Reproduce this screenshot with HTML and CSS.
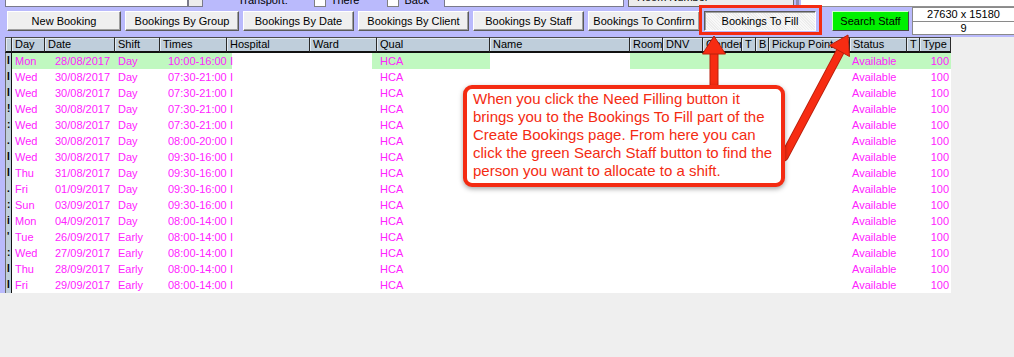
FILE: index.html
```html
<!DOCTYPE html>
<html>
<head>
<meta charset="utf-8">
<link rel="stylesheet" href="styles.css">
</head>
<body>
<div class="app">
  <div class="topbar">
    <div class="toprow">
      <div class="tinput"></div>
      <div class="tdrop"></div>
      <div class="tlabel">Transport:</div>
      <div class="tcheck c1"></div>
      <div class="tlabel small">There</div>
      <div class="tcheck c2"></div>
      <div class="tlabel small">Back</div>
      <div class="tinput wide"></div>
      <div class="tbutton">Room Number</div>
      <div class="tdivider"></div>
      <div class="tpanel"></div>
    </div>
    <div class="btnrow">
      <div class="btn w114">New Booking</div>
      <div class="btn w114">Bookings By Group</div>
      <div class="btn w111">Bookings By Date</div>
      <div class="btn w111">Bookings By Client</div>
      <div class="btn w111">Bookings By Staff</div>
      <div class="btn w112">Bookings To Confirm</div>
      <div class="btn w112 pressed">Bookings To Fill</div>
      <div class="btn search">Search Staff</div>
      <div class="sizebox">
        <div class="sizeline">27630 x 15180</div>
        <div class="sizeline">9</div>
      </div>
    </div>
  </div>

  <div class="main">
    <div class="lstrip"></div>
    <div class="grid">
      <div class="cols head">
        <div class="hc"></div>
        <div class="hc">Day</div>
        <div class="hc">Date</div>
        <div class="hc">Shift</div>
        <div class="hc">Times</div>
        <div class="hc">Hospital</div>
        <div class="hc">Ward</div>
        <div class="hc">Qual</div>
        <div class="hc">Name</div>
        <div class="hc">Room</div>
        <div class="hc">DNV</div>
        <div class="hc">Gender</div>
        <div class="hc">T</div>
        <div class="hc">B</div>
        <div class="hc">Pickup Point</div>
        <div class="hc">Status</div>
        <div class="hc">T</div>
        <div class="hc">Type</div>
      </div>

      <div class="cols row sel"><div class="ind">I</div><div class="dc">Mon</div><div class="dc date">28/08/2017</div><div class="dc">Day</div><div class="dc times">10:00-16:00</div><div class="dc hosp">I</div><div class="dc"></div><div class="dc">HCA</div><div class="dc"></div><div class="dc"></div><div class="dc"></div><div class="dc"></div><div class="dc"></div><div class="dc"></div><div class="dc"></div><div class="dc status">Available</div><div class="dc"></div><div class="dc type">100</div></div>
      <div class="cols row"><div class="ind">I</div><div class="dc">Wed</div><div class="dc date">30/08/2017</div><div class="dc">Day</div><div class="dc times">07:30-21:00</div><div class="dc hosp">I</div><div class="dc"></div><div class="dc">HCA</div><div class="dc"></div><div class="dc"></div><div class="dc"></div><div class="dc"></div><div class="dc"></div><div class="dc"></div><div class="dc"></div><div class="dc status">Available</div><div class="dc"></div><div class="dc type">100</div></div>
      <div class="cols row"><div class="ind">I</div><div class="dc">Wed</div><div class="dc date">30/08/2017</div><div class="dc">Day</div><div class="dc times">07:30-21:00</div><div class="dc hosp">I</div><div class="dc"></div><div class="dc">HCA</div><div class="dc"></div><div class="dc"></div><div class="dc"></div><div class="dc"></div><div class="dc"></div><div class="dc"></div><div class="dc"></div><div class="dc status">Available</div><div class="dc"></div><div class="dc type">100</div></div>
      <div class="cols row"><div class="ind">!</div><div class="dc">Wed</div><div class="dc date">30/08/2017</div><div class="dc">Day</div><div class="dc times">07:30-21:00</div><div class="dc hosp">I</div><div class="dc"></div><div class="dc">HCA</div><div class="dc"></div><div class="dc"></div><div class="dc"></div><div class="dc"></div><div class="dc"></div><div class="dc"></div><div class="dc"></div><div class="dc status">Available</div><div class="dc"></div><div class="dc type">100</div></div>
      <div class="cols row"><div class="ind">:</div><div class="dc">Wed</div><div class="dc date">30/08/2017</div><div class="dc">Day</div><div class="dc times">07:30-21:00</div><div class="dc hosp">I</div><div class="dc"></div><div class="dc">HCA</div><div class="dc"></div><div class="dc"></div><div class="dc"></div><div class="dc"></div><div class="dc"></div><div class="dc"></div><div class="dc"></div><div class="dc status">Available</div><div class="dc"></div><div class="dc type">100</div></div>
      <div class="cols row"><div class="ind">.</div><div class="dc">Wed</div><div class="dc date">30/08/2017</div><div class="dc">Day</div><div class="dc times">08:00-20:00</div><div class="dc hosp">I</div><div class="dc"></div><div class="dc">HCA</div><div class="dc"></div><div class="dc"></div><div class="dc"></div><div class="dc"></div><div class="dc"></div><div class="dc"></div><div class="dc"></div><div class="dc status">Available</div><div class="dc"></div><div class="dc type">100</div></div>
      <div class="cols row"><div class="ind">I</div><div class="dc">Wed</div><div class="dc date">30/08/2017</div><div class="dc">Day</div><div class="dc times">09:30-16:00</div><div class="dc hosp">I</div><div class="dc"></div><div class="dc">HCA</div><div class="dc"></div><div class="dc"></div><div class="dc"></div><div class="dc"></div><div class="dc"></div><div class="dc"></div><div class="dc"></div><div class="dc status">Available</div><div class="dc"></div><div class="dc type">100</div></div>
      <div class="cols row"><div class="ind">I</div><div class="dc">Thu</div><div class="dc date">31/08/2017</div><div class="dc">Day</div><div class="dc times">09:30-16:00</div><div class="dc hosp">I</div><div class="dc"></div><div class="dc">HCA</div><div class="dc"></div><div class="dc"></div><div class="dc"></div><div class="dc"></div><div class="dc"></div><div class="dc"></div><div class="dc"></div><div class="dc status">Available</div><div class="dc"></div><div class="dc type">100</div></div>
      <div class="cols row"><div class="ind">.</div><div class="dc">Fri</div><div class="dc date">01/09/2017</div><div class="dc">Day</div><div class="dc times">09:30-16:00</div><div class="dc hosp">I</div><div class="dc"></div><div class="dc">HCA</div><div class="dc"></div><div class="dc"></div><div class="dc"></div><div class="dc"></div><div class="dc"></div><div class="dc"></div><div class="dc"></div><div class="dc status">Available</div><div class="dc"></div><div class="dc type">100</div></div>
      <div class="cols row"><div class="ind">:</div><div class="dc">Sun</div><div class="dc date">03/09/2017</div><div class="dc">Day</div><div class="dc times">09:30-16:00</div><div class="dc hosp">I</div><div class="dc"></div><div class="dc">HCA</div><div class="dc"></div><div class="dc"></div><div class="dc"></div><div class="dc"></div><div class="dc"></div><div class="dc"></div><div class="dc"></div><div class="dc status">Available</div><div class="dc"></div><div class="dc type">100</div></div>
      <div class="cols row"><div class="ind">i</div><div class="dc">Mon</div><div class="dc date">04/09/2017</div><div class="dc">Day</div><div class="dc times">08:00-14:00</div><div class="dc hosp">I</div><div class="dc"></div><div class="dc">HCA</div><div class="dc"></div><div class="dc"></div><div class="dc"></div><div class="dc"></div><div class="dc"></div><div class="dc"></div><div class="dc"></div><div class="dc status">Available</div><div class="dc"></div><div class="dc type">100</div></div>
      <div class="cols row"><div class="ind">'</div><div class="dc">Tue</div><div class="dc date">26/09/2017</div><div class="dc">Early</div><div class="dc times">08:00-14:00</div><div class="dc hosp">I</div><div class="dc"></div><div class="dc">HCA</div><div class="dc"></div><div class="dc"></div><div class="dc"></div><div class="dc"></div><div class="dc"></div><div class="dc"></div><div class="dc"></div><div class="dc status">Available</div><div class="dc"></div><div class="dc type">100</div></div>
      <div class="cols row"><div class="ind">:</div><div class="dc">Wed</div><div class="dc date">27/09/2017</div><div class="dc">Early</div><div class="dc times">08:00-14:00</div><div class="dc hosp">I</div><div class="dc"></div><div class="dc">HCA</div><div class="dc"></div><div class="dc"></div><div class="dc"></div><div class="dc"></div><div class="dc"></div><div class="dc"></div><div class="dc"></div><div class="dc status">Available</div><div class="dc"></div><div class="dc type">100</div></div>
      <div class="cols row"><div class="ind">I</div><div class="dc">Thu</div><div class="dc date">28/09/2017</div><div class="dc">Early</div><div class="dc times">08:00-14:00</div><div class="dc hosp">I</div><div class="dc"></div><div class="dc">HCA</div><div class="dc"></div><div class="dc"></div><div class="dc"></div><div class="dc"></div><div class="dc"></div><div class="dc"></div><div class="dc"></div><div class="dc status">Available</div><div class="dc"></div><div class="dc type">100</div></div>
      <div class="cols row"><div class="ind">I</div><div class="dc">Fri</div><div class="dc date">29/09/2017</div><div class="dc">Early</div><div class="dc times">08:00-14:00</div><div class="dc hosp">I</div><div class="dc"></div><div class="dc">HCA</div><div class="dc"></div><div class="dc"></div><div class="dc"></div><div class="dc"></div><div class="dc"></div><div class="dc"></div><div class="dc"></div><div class="dc status">Available</div><div class="dc"></div><div class="dc type">100</div></div>
    </div>
    <div class="rpane"></div>
  </div>
  <div class="bottom"></div>

  <svg class="overlay" width="1014" height="357" viewBox="0 0 1014 357">
    <rect x="700.5" y="6.5" width="120" height="27" fill="none" stroke="#f42b12" stroke-width="3"/>
    <line x1="714" y1="50" x2="714" y2="90" stroke="#b8200c" stroke-width="9"/>
    <line x1="714" y1="50" x2="714" y2="90" stroke="#f72c12" stroke-width="7"/>
    <polygon points="714,36 702.5,54 725.5,54" fill="#f72c12" stroke="#b8200c" stroke-width="1"/>
    <line x1="784" y1="157" x2="841" y2="50" stroke="#b8200c" stroke-width="9" stroke-linecap="round"/>
    <line x1="784" y1="157" x2="841" y2="50" stroke="#f72c12" stroke-width="7" stroke-linecap="round"/>
    <polygon points="848,35 849.5,56.5 829.5,45.5" fill="#f72c12" stroke="#b8200c" stroke-width="1"/>
  </svg>

  <div class="callout">When you click the Need Filling button it<br>brings you to the Bookings To Fill part of the<br>Create Bookings page. From here you can<br>click the green Search Staff button to find the<br>person you want to allocate to a shift.</div>
</div>
</body>
</html>
```

FILE: styles.css
```css
html, body {
  margin: 0;
  padding: 0;
  background: #efefef;
}

.app {
  position: relative;
  width: 1014px;
  height: 357px;
  overflow: hidden;
  font-family: "Liberation Sans", Arial, sans-serif;
  font-size: 11px;
  color: #000;
}

.topbar {
  background: #babafc;
  height: 37px;
}

.toprow {
  height: 7px;
  overflow: hidden;
  display: flex;
  align-items: flex-end;
}

.tinput {
  margin-left: 5px;
  width: 181px;
  height: 20px;
  background: #fff;
  border: 1px solid #7a7a8a;
  flex: none;
}

.tinput.wide {
  margin-left: 15px;
  width: 178px;
}

.tdrop {
  width: 13px;
  height: 20px;
  background: #ececec;
  border: 1px solid #7a7a8a;
  flex: none;
}

.tlabel {
  margin-left: 35px;
  line-height: 12px;
  height: 12px;
  margin-bottom: 1px;
  white-space: nowrap;
  flex: none;
}

.tlabel.small {
  margin-left: 5px;
}

.tcheck {
  width: 10px;
  height: 14px;
  background: #fff;
  border: 1px solid #808080;
  flex: none;
}

.tcheck.c1 { margin-left: 26px; }
.tcheck.c2 { margin-left: 28px; }

.tbutton {
  margin-left: 4px;
  height: 20px;
  line-height: 18px;
  padding-left: 8px;
  background: #ececec;
  border: 1px solid #6a6a6a;
  box-sizing: border-box;
  width: 166px;
  white-space: nowrap;
  flex: none;
}

.tdivider {
  margin-left: 2px;
  width: 3px;
  height: 20px;
  background: #8c8cb4;
  flex: none;
}

.tpanel {
  margin-left: 2px;
  flex: 1;
  height: 20px;
  background: #fff;
  border-bottom: 1px solid #909090;
}

.btnrow {
  height: 30px;
  display: flex;
  align-items: flex-start;
  gap: 4px;
  padding-left: 7px;
}

.btn {
  margin-top: 4px;
  height: 20px;
  box-sizing: border-box;
  background: #efefef;
  border: 1px solid;
  border-color: #ffffff #5a5a5a #5a5a5a #ffffff;
  box-shadow: inset -1px -1px 0 #a0a0a0;
  text-align: center;
  line-height: 18px;
  white-space: nowrap;
  flex: none;
}

.w114 { width: 114px; }
.w111 { width: 111px; }
.w112 { width: 112px; }

.btn.pressed {
  border-color: #5a5a5a #ffffff #ffffff #5a5a5a;
  box-shadow: inset 1px 1px 0 #a0a0a0;
  background: #f5f5f5;
  background-image: repeating-linear-gradient(45deg, #f8f8f8 0 1px, #ececec 1px 2px);
}

.btn.search {
  margin-left: 12px;
  width: 77px;
  background: #00f000;
  border-color: #d0ffd0 #4a4a4a #4a4a4a #d0ffd0;
  box-shadow: none;
}

.sizebox {
  margin-left: -1px;
  margin-top: 0;
  flex: 1;
  height: 28px;
  box-sizing: border-box;
  background: #fff;
  border: 1px solid #8a8a8a;
  border-right: none;
  display: flex;
  flex-direction: column;
}

.sizeline {
  height: 13px;
  line-height: 13px;
  text-align: center;
}

.sizeline:first-child {
  border-bottom: 1px solid #8a8a8a;
}

.main {
  display: flex;
  height: 256px;
}

.lstrip {
  width: 5px;
  background: #babafc;
  flex: none;
}

.grid {
  width: 946px;
  background: #fff;
  flex: none;
}

.rpane {
  flex: 1;
  background: #efefef;
}

.bottom {
  height: 64px;
  background: #efefef;
}

.cols {
  display: grid;
  grid-template-columns: 7px 33px 70px 45px 67px 83px 67px 113px 140px 33px 40px 39px 14px 13px 81px 57px 13px 31px;
}

.head {
  height: 16px;
}

.hc {
  background: #bfcedb;
  box-sizing: border-box;
  height: 16px;
  border-right: 1px solid #2a2a2a;
  border-bottom: 2px solid #111;
  border-top: 1px solid #4a4a4a;
  box-shadow: inset 1px 1px 0 #e4ebf2;
  padding-left: 3px;
  line-height: 13px;
  white-space: nowrap;
  overflow: hidden;
}

.hc:first-child {
  border-left: 1px solid #6a6a6a;
}

.row {
  height: 16px;
  color: #ff22ff;
}

.row.sel {
  background: linear-gradient(to right,
    transparent 0 7px,
    #c0f8c0 7px 227px,
    #fff 227px 367px,
    #c0f8c0 367px 485px,
    #fff 485px 625px,
    #c0f8c0 625px 946px);
}

.ind {
  background: #bfcedb;
  border-left: 1px solid #6a6a6a;
  border-right: 1px solid #111;
  color: #000;
  font-weight: bold;
  font-size: 10px;
  line-height: 16px;
  padding-left: 1px;
  overflow: hidden;
}

.dc {
  line-height: 16px;
  padding-left: 3px;
  white-space: nowrap;
  overflow: hidden;
}

.dc.date { padding-left: 10px; }
.dc.times { padding-left: 8px; }
.dc.hosp { padding-left: 3px; }
.dc.status { padding-left: 2px; }
.dc.type {
  text-align: right;
  padding-left: 0;
  padding-right: 2px;
}

.overlay {
  position: absolute;
  left: 0;
  top: 0;
  pointer-events: none;
}

.callout {
  position: absolute;
  left: 463px;
  top: 85px;
  width: 322px;
  height: 102px;
  box-sizing: border-box;
  background: #fff;
  border: 4px solid #f42b12;
  border-radius: 9px;
  box-shadow: 0 2px 5px rgba(0, 0, 0, 0.35);
  padding: 1px 2px 0 6px;
  color: #f42b12;
  font-family: "Liberation Sans", Arial, sans-serif;
  font-size: 15px;
  line-height: 18px;
  white-space: nowrap;
}
```
